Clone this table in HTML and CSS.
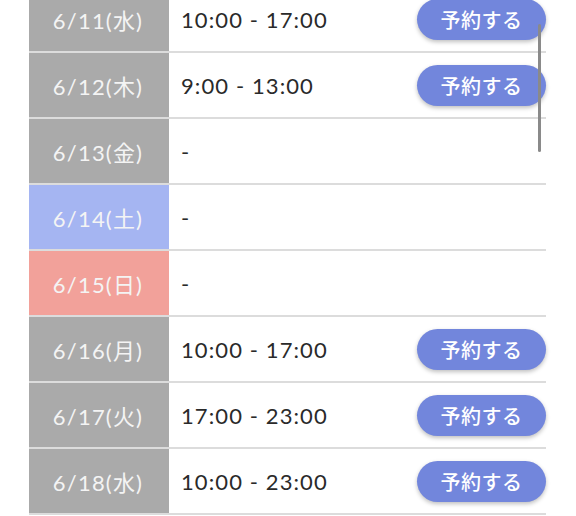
FILE: index.html
```html
<!DOCTYPE html>
<html lang="ja">
<head>
<meta charset="utf-8">
<link rel="stylesheet" href="styles.css">
</head>
<body>
<div class="page">
  <div class="schedule">
    <div class="row"><div class="date">6/11(水)</div><div class="slot"><span class="time">10:00 - 17:00</span><button class="reserve">予約する</button></div></div>
    <div class="row"><div class="date">6/12(木)</div><div class="slot"><span class="time">9:00 - 13:00</span><button class="reserve">予約する</button></div></div>
    <div class="row"><div class="date">6/13(金)</div><div class="slot"><span class="time">-</span></div></div>
    <div class="row"><div class="date sat">6/14(土)</div><div class="slot"><span class="time">-</span></div></div>
    <div class="row"><div class="date sun">6/15(日)</div><div class="slot"><span class="time">-</span></div></div>
    <div class="row"><div class="date">6/16(月)</div><div class="slot"><span class="time">10:00 - 17:00</span><button class="reserve">予約する</button></div></div>
    <div class="row"><div class="date">6/17(火)</div><div class="slot"><span class="time">17:00 - 23:00</span><button class="reserve">予約する</button></div></div>
    <div class="row"><div class="date">6/18(水)</div><div class="slot"><span class="time">10:00 - 23:00</span><button class="reserve">予約する</button></div></div>
  </div>
  <div class="scrollbar"></div>
</div>
</body>
</html>
```
FILE: styles.css
```css
html, body {
  margin: 0;
  padding: 0;
  background: #ffffff;
  overflow: hidden;
}
body {
  font-family: "Lato", "Noto Sans CJK JP", sans-serif;
}
.page {
  position: relative;
  width: 576px;
  height: 516px;
  overflow: hidden;
}
.schedule {
  margin-top: -13px;
  margin-left: 29px;
  width: 517px;
  display: flex;
  flex-direction: column;
}
.row {
  display: flex;
  height: 64px;
  border-bottom: 2px solid #dcdcdc;
}
.date {
  width: 140px;
  flex: none;
  background: #aaaaaa;
  color: #f4f4f4;
  font-size: 22px;
  display: flex;
  align-items: center;
  justify-content: center;
  letter-spacing: 1.2px;
  padding-right: 2px;
  box-sizing: border-box;
}
.date.sat { background: #a5b5f2; }
.date.sun { background: #f2a19a; }
.slot {
  flex: 1;
  display: flex;
  align-items: center;
  justify-content: space-between;
  padding-left: 12px;
}
.time {
  font-size: 22px;
  color: #2a2a2a;
  letter-spacing: 1.1px;
}
.reserve {
  width: 129px;
  height: 41px;
  border: none;
  border-radius: 21px;
  background: #7286dc;
  color: #ffffff;
  font-family: "Noto Sans CJK JP", sans-serif;
  font-size: 20px;
  font-weight: 500;
  letter-spacing: 0.5px;
  box-shadow: 0 2px 4px rgba(0,0,0,0.25);
  padding: 0;
  margin-top: 1px;
}
.scrollbar {
  position: absolute;
  left: 538px;
  top: 24px;
  width: 3px;
  height: 128px;
  border-radius: 2px;
  background: #8a8a8a;
}
```
